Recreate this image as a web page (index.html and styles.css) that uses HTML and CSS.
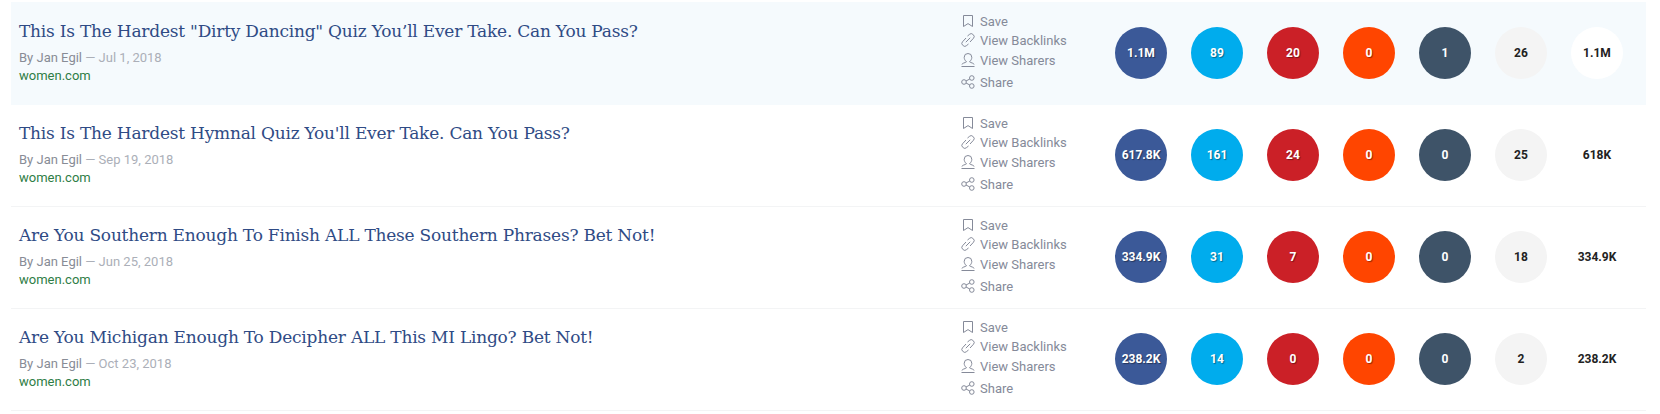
FILE: index.html
```html
<!DOCTYPE html>
<html lang="en">
<head>
    <meta charset="UTF-8">
    <title>Content results</title>
    <link rel="stylesheet" href="styles.css">
</head>
<body>
    <!-- Shared action icons -->
    <svg class="icon-defs" width="0" height="0">
        <symbol id="i-save" viewBox="0 0 14 14"><path d="M2.5 1.5h9v11L7 9.6 2.5 12.500z"/></symbol>
        <symbol id="i-link" viewBox="0 0 14 14"><path d="M6.500 3 8.600 1.300a2.300 2.300 0 0 1 3.200 0l.7.7a2.300 2.300 0 0 1 0 3.200L9 9M7.500 11 5.400 12.700a2.300 2.300 0 0 1-3.200 0l-.7-.7a2.300 2.300 0 0 1 0-3.200L5 5M4.800 9.200 9.200 4.800"/></symbol>
        <symbol id="i-user" viewBox="0 0 14 14"><path d="M.5 13.500h13M1 11.500c0-1.500 3-1.500 4.500-2.700C4 7.500 3.200 6 3.200 4.300a3.800 3.800 0 0 1 7.600 0c0 1.700-.8 3.200-2.300 4.500C10 10 13 10 13 11.500"/></symbol>
        <symbol id="i-share" viewBox="0 0 14 14"><circle cx="3" cy="7" r="2.300"/><circle cx="10.800" cy="3" r="2.300"/><circle cx="10.800" cy="11" r="2.300"/><path d="M5 6 8.800 4M5 8l3.800 2"/></symbol>
    </svg>

    <div class="results">
        <div class="row active">
            <div class="info">
                <h2 class="title">This Is The Hardest "Dirty Dancing" Quiz You’ll Ever Take. Can You Pass?</h2>
                <div class="byline">By Jan Egil <span class="date">— Jul 1, 2018</span></div>
                <div class="domain">women.com</div>
            </div>
            <ul class="actions">
                <li class="save"><svg class="icon"><use href="#i-save"/></svg>Save</li>
                <li><svg class="icon"><use href="#i-link"/></svg>View Backlinks</li>
                <li><svg class="icon"><use href="#i-user"/></svg>View Sharers</li>
                <li class="share"><svg class="icon"><use href="#i-share"/></svg>Share</li>
            </ul>
            <div class="stats">
                <span class="stat facebook">1.1M</span>
                <span class="stat twitter">89</span>
                <span class="stat pinterest">20</span>
                <span class="stat reddit">0</span>
                <span class="stat tumblr">1</span>
                <span class="stat links">26</span>
                <span class="stat total">1.1M</span>
            </div>
        </div>

        <div class="row">
            <div class="info">
                <h2 class="title">This Is The Hardest Hymnal Quiz You'll Ever Take. Can You Pass?</h2>
                <div class="byline">By Jan Egil <span class="date">— Sep 19, 2018</span></div>
                <div class="domain">women.com</div>
            </div>
            <ul class="actions">
                <li class="save"><svg class="icon"><use href="#i-save"/></svg>Save</li>
                <li><svg class="icon"><use href="#i-link"/></svg>View Backlinks</li>
                <li><svg class="icon"><use href="#i-user"/></svg>View Sharers</li>
                <li class="share"><svg class="icon"><use href="#i-share"/></svg>Share</li>
            </ul>
            <div class="stats">
                <span class="stat facebook">617.8K</span>
                <span class="stat twitter">161</span>
                <span class="stat pinterest">24</span>
                <span class="stat reddit">0</span>
                <span class="stat tumblr">0</span>
                <span class="stat links">25</span>
                <span class="stat total">618K</span>
            </div>
        </div>

        <div class="row">
            <div class="info">
                <h2 class="title">Are You Southern Enough To Finish ALL These Southern Phrases? Bet Not!</h2>
                <div class="byline">By Jan Egil <span class="date">— Jun 25, 2018</span></div>
                <div class="domain">women.com</div>
            </div>
            <ul class="actions">
                <li class="save"><svg class="icon"><use href="#i-save"/></svg>Save</li>
                <li><svg class="icon"><use href="#i-link"/></svg>View Backlinks</li>
                <li><svg class="icon"><use href="#i-user"/></svg>View Sharers</li>
                <li class="share"><svg class="icon"><use href="#i-share"/></svg>Share</li>
            </ul>
            <div class="stats">
                <span class="stat facebook">334.9K</span>
                <span class="stat twitter">31</span>
                <span class="stat pinterest">7</span>
                <span class="stat reddit">0</span>
                <span class="stat tumblr">0</span>
                <span class="stat links">18</span>
                <span class="stat total">334.9K</span>
            </div>
        </div>

        <div class="row">
            <div class="info">
                <h2 class="title">Are You Michigan Enough To Decipher ALL This MI Lingo? Bet Not!</h2>
                <div class="byline">By Jan Egil <span class="date">— Oct 23, 2018</span></div>
                <div class="domain">women.com</div>
            </div>
            <ul class="actions">
                <li class="save"><svg class="icon"><use href="#i-save"/></svg>Save</li>
                <li><svg class="icon"><use href="#i-link"/></svg>View Backlinks</li>
                <li><svg class="icon"><use href="#i-user"/></svg>View Sharers</li>
                <li class="share"><svg class="icon"><use href="#i-share"/></svg>Share</li>
            </ul>
            <div class="stats">
                <span class="stat facebook">238.2K</span>
                <span class="stat twitter">14</span>
                <span class="stat pinterest">0</span>
                <span class="stat reddit">0</span>
                <span class="stat tumblr">0</span>
                <span class="stat links">2</span>
                <span class="stat total">238.2K</span>
            </div>
        </div>
    </div>
</body>
</html>
```

FILE: styles.css
```css
body {
    margin: 0;
    padding: 3px 14px 0 11px;
    background-color: #ffffff;
    font-family: 'Roboto', sans-serif;
}

.icon-defs {
    position: absolute;
}

.row {
    display: flex;
    height: 101px;
    border-bottom: 1px solid #f3f4f5;
}

.row.active {
    background-color: #f5fafd;
    border-bottom-color: #f5fafd;
    box-shadow: 0 -1px 0 #f5fafd;
}

/* Title column */
.info {
    width: 950px;
    padding: 15px 0 0 8px;
    box-sizing: border-box;
}

.title {
    margin: 0 0 5px;
    font-family: 'DejaVu Serif', serif;
    font-size: 17px;
    font-weight: 400;
    line-height: 26px;
    letter-spacing: -0.22px;
    color: #2f4b85;
}

.byline {
    font-size: 13px;
    line-height: 18px;
    color: #888c96;
}

.date {
    color: #abafb8;
}

.domain {
    font-size: 13px;
    line-height: 18px;
    color: #2f7d46;
}

/* Actions column */
.actions {
    width: 154px;
    margin: 0;
    padding: 9px 0 0;
    list-style: none;
    font-size: 13px;
    color: #858a99;
}

.actions li {
    display: flex;
    align-items: center;
    height: 20px;
}

.actions .save {
    height: 18px;
}

.actions .share {
    height: 24px;
}

.icon {
    width: 14px;
    height: 14px;
    margin-right: 5px;
    fill: none;
    stroke: #858a99;
    stroke-width: 1;
}

/* Counter circles */
.stats {
    display: flex;
    gap: 24px;
    padding-top: 24px;
}

.stat {
    display: flex;
    align-items: center;
    justify-content: center;
    width: 52px;
    height: 52px;
    border-radius: 50%;
    font-size: 12px;
    font-weight: 700;
    color: #ffffff;
    text-shadow: 1px 1px 1px rgba(0, 0, 0, 0.4);
}

.facebook { background-color: #3b5998; }
.twitter { background-color: #00aced; }
.pinterest { background-color: #cb2027; }
.reddit { background-color: #ff4500; }
.tumblr { background-color: #3e5368; text-shadow: none; }

.links {
    background-color: #f4f4f4;
    color: #222222;
    text-shadow: none;
}

.total {
    background-color: #ffffff;
    color: #222222;
    text-shadow: none;
}
```
